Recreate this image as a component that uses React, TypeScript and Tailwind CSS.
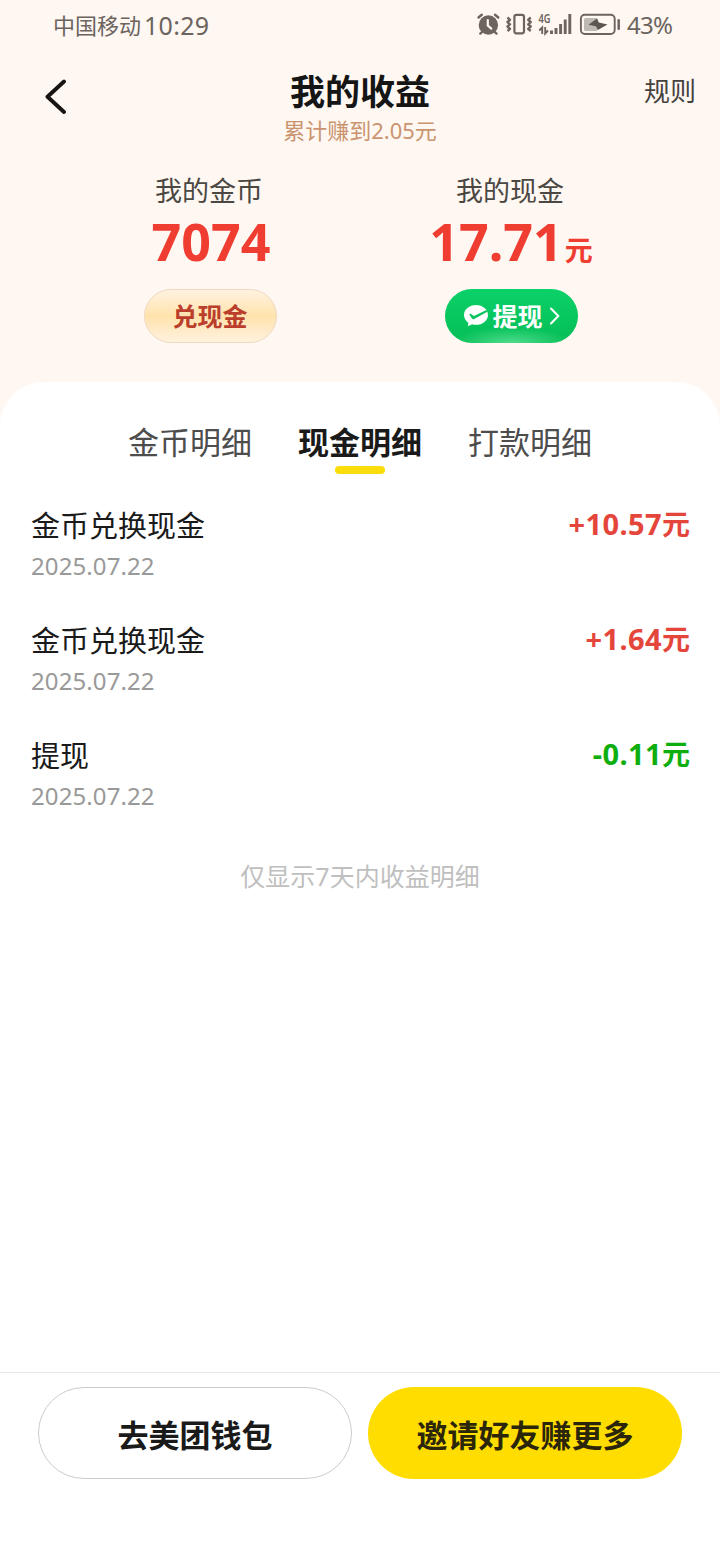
import React, { useState } from "react";
import clsx from "clsx";

type RecordItem = {
    id: number;
    title: string;
    date: string;
    amount: string;
    income: boolean;
};

const tabs = ["金币明细", "现金明细", "打款明细"];

const records: RecordItem[] = [
    { id: 1, title: "金币兑换现金", date: "2025.07.22", amount: "+10.57", income: true },
    { id: 2, title: "金币兑换现金", date: "2025.07.22", amount: "+1.64", income: true },
    { id: 3, title: "提现", date: "2025.07.22", amount: "-0.11", income: false },
];

const StatusIcons = () => (
    <svg width="146" height="30" viewBox="476 10 146 30" fill="none" className="shrink-0">
        {/* alarm */}
        <circle cx="488.4" cy="25" r="9.7" fill="#6b645f" />
        <path
            d="M478.5 17.5L481.8 14.8M498.3 17.5L495 14.8M482.5 31.5L480.3 33.6M494.3 31.5L496.5 33.6"
            stroke="#6b645f"
            strokeWidth="2.4"
            strokeLinecap="round"
        />
        <path d="M487.8 20V25.5L491.3 28.6" stroke="#fff7f1" strokeWidth="2.2" strokeLinecap="round" />
        {/* vibrate */}
        <rect x="514.4" y="14.9" width="9.6" height="18.4" rx="2" stroke="#6b645f" strokeWidth="2.2" />
        <path
            d="M507.5 17.5L510 19.8L507.5 22L510 24.3L507.5 26.5L510 28.8L507.5 31M530.7 17.5L528.2 19.8L530.7 22L528.2 24.3L530.7 26.5L528.2 28.8L530.7 31"
            stroke="#6b645f"
            strokeWidth="2.4"
            strokeLinejoin="round"
        />
        {/* signal */}
        <text
            x="538.5"
            y="23.2"
            fontSize="12.5"
            fontWeight="600"
            fill="#6b645f"
            textLength="12"
            lengthAdjust="spacingAndGlyphs"
        >
            4G
        </text>
        <path d="M539.2 30.5L542.2 27.5V34M545.2 27V33.5L548 30.5" stroke="#6b645f" strokeWidth="1.9" />
        <path
            d="M551.5 30.5V34M556 28V34M560.6 24V34M565.2 19.5V34M569.8 14V34"
            stroke="#6b645f"
            strokeWidth="2.9"
        />
        {/* battery */}
        <rect x="580.9" y="14.8" width="33.8" height="19.2" rx="4" stroke="#6b645f" strokeWidth="1.9" />
        <rect x="584" y="17.9" width="13.5" height="13" rx="1.5" fill="#bfb9b4" />
        <path d="M588.5 24.8L597 18.5L598.8 22.6L607.5 24.5L597.8 30L596 26.2Z" fill="#5c5550" />
        <path d="M618.7 20.3V28.8" stroke="#6b645f" strokeWidth="2.5" strokeLinecap="round" />
    </svg>
);

const StatusBar = () => (
    <div className="flex h-[50px] items-center pl-[53px] pr-[47px] text-[#6b645f]">
        <span className="text-[22px] leading-[50px]">中国移动</span>
        <span className="ml-[3px] text-[25px] leading-[50px] tracking-[0.3px]">10:29</span>
        <div className="ml-auto flex items-center">
            <StatusIcons />
            <span className="ml-[5px] w-[46px] whitespace-nowrap text-[24px] leading-[50px] tracking-[-0.7px]">43%</span>
        </div>
    </div>
);

const WechatIcon = () => (
    <svg width="26" height="24" viewBox="0 0 26 24" className="shrink-0">
        <path
            d="M13 1C6.4 1 1 5.4 1 11c0 3.1 1.7 5.900 4.400 7.700l-.6 3.500 4.300-2c1.200.4 2.500.6 3.900.6 6.600 0 12-4.400 12-9.900S19.600 1 13 1z"
            fill="#fff"
        />
        <path d="M6.2 10.2Q7 9.400 8 10L11 12L23.400 6L24.300 7.800L11.200 15Q9.800 15.700 8.900 14.500Z" fill="#0ac460" />
    </svg>
);

const App = () => {
    const [activeTab, setActiveTab] = useState<number>(1);

    return (
        <div className="flex h-[1560px] w-[720px] flex-col overflow-hidden bg-[#fff7f1] font-['Noto_Sans','Noto_Sans_CJK_SC',sans-serif]">
            <StatusBar />

            <header className="grid h-[124px] grid-cols-[220px_1fr_220px] items-start">
                <button className="ml-[44px] mt-[29px] w-6">
                    <svg width="24" height="36" viewBox="0 0 24 36" fill="none">
                        <path
                            d="M20 2.5L3.5 17.8L20 33"
                            stroke="#151515"
                            strokeWidth="3.9"
                            strokeLinecap="round"
                            strokeLinejoin="round"
                        />
                    </svg>
                </button>
                <div className="flex flex-col items-center pt-[20px]">
                    <h1 className="text-[35px] font-bold leading-[44px] text-[#151515]">我的收益</h1>
                    <p className="mt-[3px] text-[22px] leading-[26px] text-[#c9946f]">累计赚到2.05元</p>
                </div>
                <button className="ml-auto mr-[24px] mt-[26px] text-[26px] leading-[30px] text-[#46423f]">规则</button>
            </header>

            <section className="flex h-[208px] pl-[59px]">
                <div className="flex w-[302px] flex-col items-center">
                    <span className="mt-[2px] pr-[2px] text-[27px] leading-[30px] text-[#4b4743]">我的金币</span>
                    <div className="mt-[10px] h-[50px] pl-[2px] text-[52px] font-bold leading-[50px] text-[#f03d32]">
                        7074
                    </div>
                    <button className="mt-[23px] h-[54px] w-[133px] rounded-full border border-[#f0d9c0] bg-linear-to-b from-[#fff2e0] via-[#ffe3ad] to-[#fff1de] text-[25px] font-bold leading-[52px] text-[#bb3d2b]">
                        兑现金
                    </button>
                </div>
                <div className="flex w-[300px] flex-col items-center">
                    <span className="mt-[2px] pr-[2px] text-[27px] leading-[30px] text-[#4b4743]">我的现金</span>
                    <div className="mt-[10px] flex h-[50px] items-baseline font-bold text-[#f03d32]">
                        <span className="text-[52px] leading-[50px]">17.71</span>
                        <span className="ml-[2px] text-[28px] leading-[28px]">元</span>
                    </div>
                    <button className="mt-[23px] flex h-[54px] w-[133px] items-center rounded-full bg-[radial-gradient(ellipse_60px_16px_at_50%_100%,#4fdc8c,transparent),linear-gradient(to_bottom,#0bd169,#05bd55)] pl-[18px] text-white">
                        <WechatIcon />
                        <span className="ml-[4px] text-[25px] font-bold leading-[54px]">提现</span>
                        <svg width="12" height="20" viewBox="0 0 12 20" fill="none" className="ml-[6px]">
                            <path d="M2 2.5L9.3 10L2 17.5" stroke="#fff" strokeWidth="2" strokeLinecap="round" />
                        </svg>
                    </button>
                </div>
            </section>

            <main className="flex flex-1 flex-col rounded-t-[44px] bg-white">
                <nav className="flex justify-center gap-[46px] pt-[38px]">
                    {tabs.map((tab, index) => (
                        <button
                            key={tab}
                            onClick={() => setActiveTab(index)}
                            className="flex h-[54px] flex-col items-center"
                        >
                            <span
                                className={clsx(
                                    "text-[31px] leading-[44px]",
                                    activeTab === index ? "font-bold text-[#1a1a1a]" : "text-[#4d4d4d]"
                                )}
                            >
                                {tab}
                            </span>
                            {activeTab === index && <span className="mt-[2px] h-2 w-[50px] rounded-[4px] bg-[#fadd0a]" />}
                        </button>
                    ))}
                </nav>

                <ul className="mt-[32px] pl-[31px] pr-[30px]">
                    {records.map((item) => (
                        <li key={item.id} className="flex h-[115px] items-start justify-between">
                            <div className="flex flex-col">
                                <span className="text-[29px] leading-[40px] text-[#1a1a1a]">{item.title}</span>
                                <span className="mt-[5px] text-[24px] leading-[30px] tracking-[0.1px] text-[#999]">
                                    {item.date}
                                </span>
                            </div>
                            <span
                                className={clsx(
                                    "text-[28px] font-bold leading-[36px]",
                                    item.income ? "text-[#e5463c]" : "text-[#0fae0f]"
                                )}
                            >
                                <span className="text-[29px] tracking-[0.4px]">{item.amount}</span>元
                            </span>
                        </li>
                    ))}
                </ul>

                <p className="mt-[10px] text-center text-[25px] leading-[30px] text-[#bfbfbf]">仅显示7天内收益明细</p>

                <footer className="mt-auto flex h-[188px] items-start gap-4 border-t border-[#e8e8e8] px-[38px] pt-[14px]">
                    <button className="h-[92px] w-[314px] rounded-full border border-[#ccc] text-[31px] font-bold leading-[95px] text-[#1a1a1a]">
                        去美团钱包
                    </button>
                    <button className="h-[92px] w-[314px] rounded-full bg-[#ffdd00] text-[31px] font-bold leading-[97px] text-[#2b2609]">
                        邀请好友赚更多
                    </button>
                </footer>
            </main>
        </div>
    );
};

export default App;
